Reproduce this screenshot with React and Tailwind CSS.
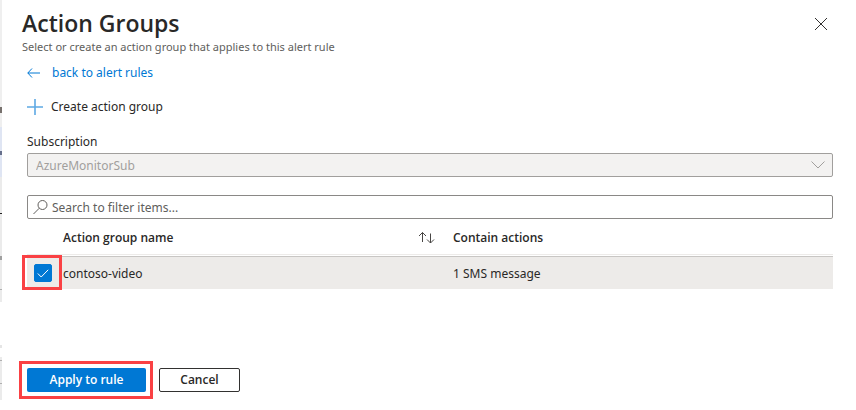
import { useState } from "react";

function EdgeStrip() {
  return (
    <div aria-hidden="true" className="flex w-[2px] shrink-0 flex-col overflow-hidden">
      <div className="h-[107px] bg-[#efefef]" />
      <div className="h-[6px] bg-[#77716d]" />
      <div className="h-[14px] bg-[#efefef]" />
      <div className="h-[24px] bg-[#dfe5f3]" />
      <div className="h-[4px] bg-[#67708c]" />
      <div className="h-[22px] bg-[#dfe5f3]" />
      <div className="h-[36px] bg-[#ebebeb]" />
      <div className="h-px bg-[#222222]" />
      <div className="h-[42px] bg-[#ebebeb]" />
      <div className="h-[4px] bg-[#a0a0a0]" />
      <div className="h-[29px] bg-[#ebebeb]" />
      <div className="h-px bg-[#b0b0b0]" />
      <div className="h-[12px] bg-[#ebebeb]" />
      <div className="h-[43px]" />
      <div className="h-[3px] bg-[#e5e5e5]" />
      <div className="h-[9px]" />
      <div className="h-[3px] bg-[#ebebeb]" />
      <div className="h-px bg-[#b0b0b0]" />
      <div className="h-[22px] bg-[#ebebeb]" />
      <div className="h-px bg-[#b0b0b0]" />
      <div className="h-[16px] bg-[#ebebeb]" />
    </div>
  );
}

export default function App() {
  const [checked, setChecked] = useState(true);

  return (
    <div className="flex bg-white font-['Noto_Sans','Open_Sans',sans-serif] text-[12px] leading-4 text-[#292827]">
      <EdgeStrip />
      <main className="min-w-0 flex-1 pb-3 pl-5 pr-[23px] pt-2">
        <header className="flex items-start justify-between">
          <div>
            <h1 className="font-['Open_Sans',sans-serif] text-[23px] font-semibold leading-[30px]">Action Groups</h1>
            <p className="text-[11px] leading-[18px] text-[#605e5c]">
              Select or create an action group that applies to this alert rule
            </p>
          </div>
          <button type="button" aria-label="Close" className="mr-1 mt-2 p-px">
            <svg width="14" height="14" viewBox="0 0 14 14" fill="none" stroke="#323130" strokeWidth="1">
              <path d="M1 1l12 12M13 1L1 13" />
            </svg>
          </button>
        </header>

        <div className="pl-[5px]">
          <a href="#rules" className="mt-[9px] flex h-4 items-center gap-3 text-[#0078d4]">
            <svg width="13" height="10" viewBox="0 0 13 10" fill="none" stroke="currentColor" strokeWidth="1">
              <path d="M5 .5L.8 5 5 9.500M.8 5H13" />
            </svg>
            back to alert rules
          </a>
          <button type="button" className="mt-[18px] flex h-4 items-center gap-2">
            <svg width="16" height="16" viewBox="0 0 16 16" fill="none" stroke="#5ea9e4" strokeWidth="1.6">
              <path d="M8 0v16M0 8h16" />
            </svg>
            Create action group
          </button>

          <label htmlFor="subscription" className="mt-[19px] block">Subscription</label>
          <div className="mt-[3px] grid items-center">
            <select
              id="subscription"
              disabled
              className="col-start-1 row-start-1 h-6 w-full appearance-none rounded-[2px] border border-[#a19f9d] bg-[#f3f2f1] px-2 pt-0.5 text-[#a19f9d] opacity-100"
            >
              <option>AzureMonitorSub</option>
            </select>
            <svg className="pointer-events-none col-start-1 row-start-1 mr-2 justify-self-end" width="14" height="8" viewBox="0 0 14 8" fill="none" stroke="#a19f9d">
              <path d="M.5 .5L7 7 13.500 .5" />
            </svg>
          </div>

          <div className="mt-[18px] flex h-6 items-center gap-1 rounded-[2px] border border-[#8a8886] px-[5px]">
            <svg className="shrink-0" width="15" height="15" viewBox="0 0 15 15" fill="none" stroke="#605e5c">
              <circle cx="9.500" cy="5" r="4.500" />
              <path d="M6.300 8.200L.5 14" />
            </svg>
            <input
              type="search"
              aria-label="Search to filter items"
              placeholder="Search to filter items..."
              className="min-w-0 flex-1 pt-0.5 outline-none placeholder:text-[#605e5c]"
            />
          </div>

          <table className="w-full table-fixed border-separate border-spacing-0 text-left">
            <colgroup>
              <col className="w-9" />
              <col className="w-[390px]" />
              <col />
            </colgroup>
            <thead className="font-['Open_Sans',sans-serif]">
              <tr className="h-[36px]">
                <th aria-label="Select" className="border-b border-[#edebe9] p-0" />
                <th className="border-b border-[#edebe9] p-0 pt-[3px] font-semibold">
                  <button type="button" className="flex w-full items-center justify-between pr-[18px]">
                    Action group name
                    <svg width="17" height="12" viewBox="0 0 17 12" fill="none" stroke="#484644">
                      <path d="M4.500 10V.5M1 4L4.500 .5 8 4M12.500 1.500V11M9 7.500l3.500 3.500L16 7.500" />
                    </svg>
                  </button>
                </th>
                <th className="border-b border-[#edebe9] p-0 pt-[3px] font-semibold">Contain actions</th>
              </tr>
              <tr aria-hidden="true" className="h-px"><td colSpan={3} className="p-0" /></tr>
            </thead>
            <tbody>
              <tr className="h-[33px] bg-[#edebe9]">
                <td className="border-t border-[#c8c6c4] p-0">
                  <label className="relative ml-[7px] grid size-[18px] place-items-center">
                    <input
                      type="checkbox"
                      aria-label="Select contoso-video"
                      checked={checked}
                      onChange={(e) => setChecked(e.target.checked)}
                      className="col-start-1 row-start-1 size-[18px] appearance-none rounded-[2px] border border-[#323130] bg-white checked:border-[#0078d4] checked:bg-[#0078d4]"
                    />
                    <svg className="pointer-events-none col-start-1 row-start-1" width="12" height="9" viewBox="0 0 12 9" fill="none" stroke="white">
                      <path d="M.8 4.500L4.200 8 11.200 .8" />
                    </svg>
                    <span className="pointer-events-none absolute -bottom-2 -left-3 -right-2.5 -top-[9px] border-3 border-[#fa4144]" />
                  </label>
                </td>
                <td className="border-t border-[#c8c6c4] p-0 pt-px">contoso-video</td>
                <td className="border-t border-[#c8c6c4] p-0 pt-px">1 SMS message</td>
              </tr>
            </tbody>
          </table>
        </div>

        <footer className="-ml-[3px] mt-[72px] flex items-center gap-[6px] font-['Open_Sans',sans-serif]">
          <div className="border-3 border-[#fa4144] py-1 pl-[5px] pr-1">
            <button type="button" className="block h-6 w-[119px] rounded-[2px] bg-[#0078d4] font-semibold text-white">
              Apply to rule
            </button>
          </div>
          <button type="button" className="h-6 w-[81px] rounded-[2px] border border-[#323130] font-semibold">
            Cancel
          </button>
        </footer>
      </main>
    </div>
  );
}
